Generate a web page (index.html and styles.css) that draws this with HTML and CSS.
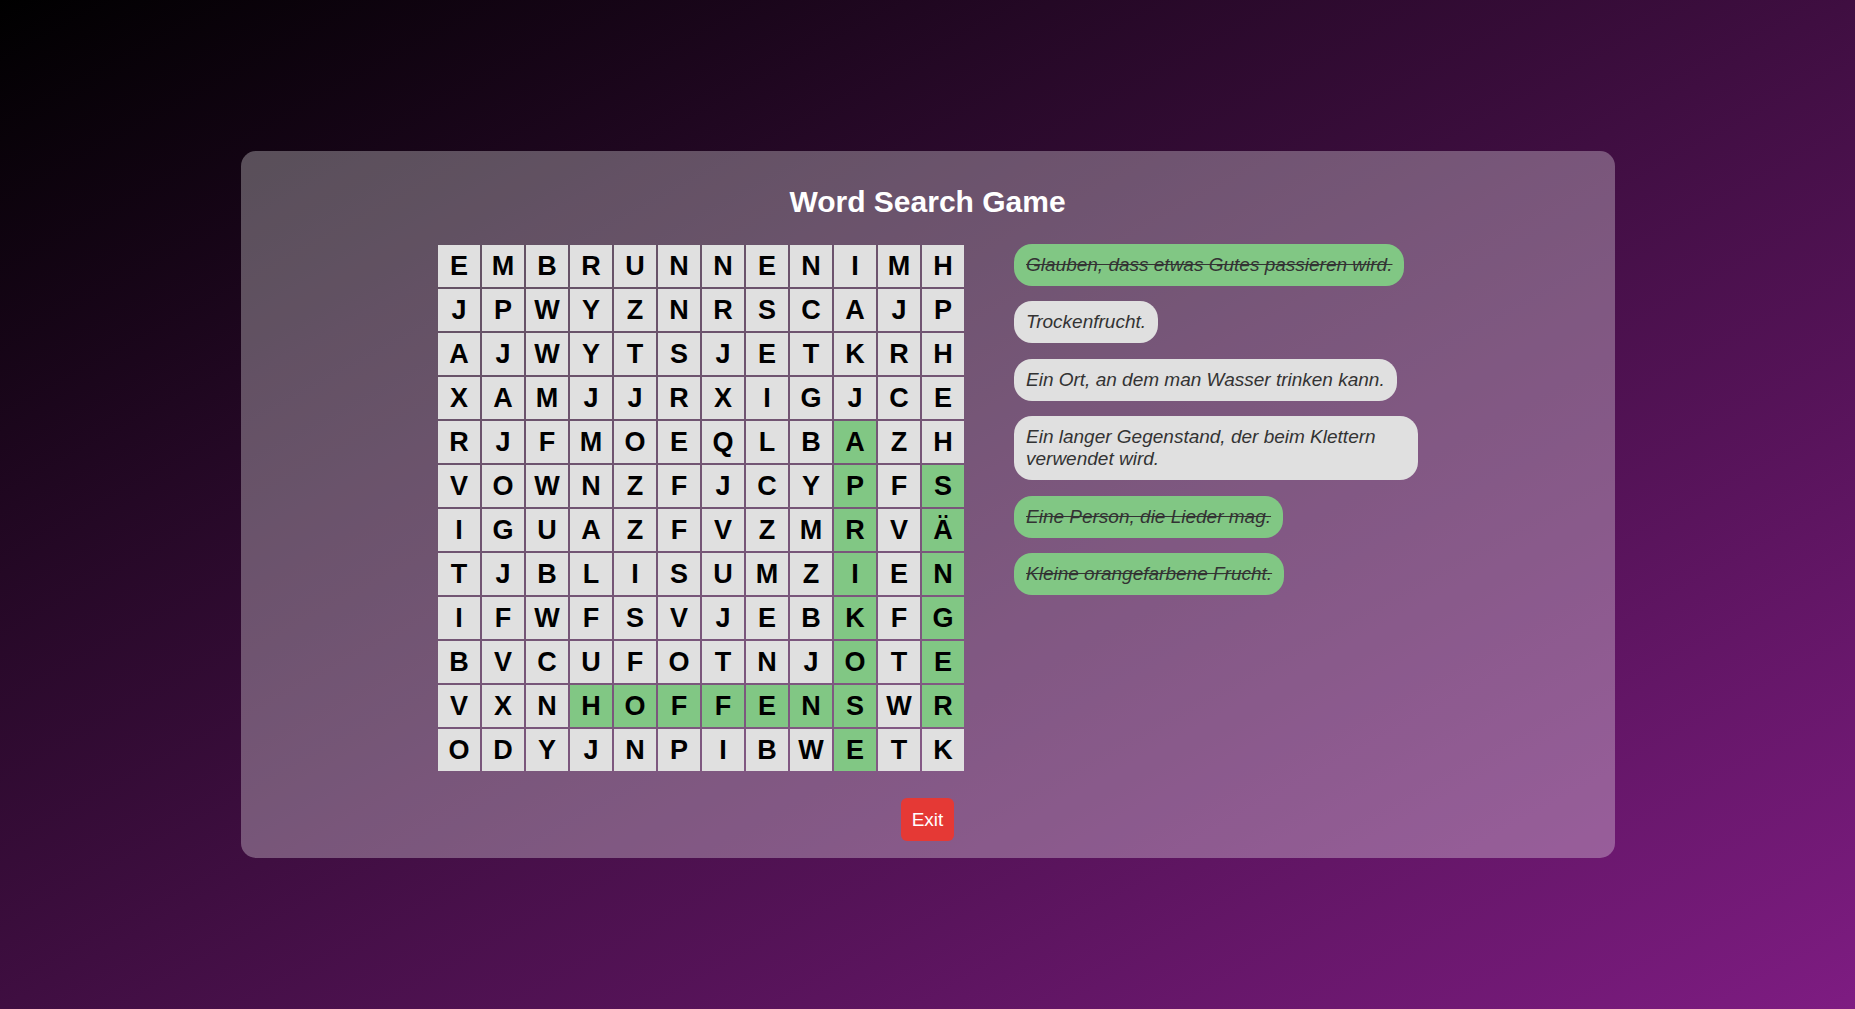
FILE: index.html
```html
<!DOCTYPE html>
<html lang="de">

<head>
    <meta charset="UTF-8">
    <meta name="viewport" content="width=device-width, initial-scale=1.0">
    <title>Word Search Game</title>
    <link rel="stylesheet" href="styles.css">
</head>

<body>
    <div class="game">
        <h1 class="title">Word Search Game</h1>

        <div class="board">
            <div class="grid">
                <div class="cell">E</div><div class="cell">M</div><div class="cell">B</div><div class="cell">R</div><div class="cell">U</div><div class="cell">N</div><div class="cell">N</div><div class="cell">E</div><div class="cell">N</div><div class="cell">I</div><div class="cell">M</div><div class="cell">H</div>
                <div class="cell">J</div><div class="cell">P</div><div class="cell">W</div><div class="cell">Y</div><div class="cell">Z</div><div class="cell">N</div><div class="cell">R</div><div class="cell">S</div><div class="cell">C</div><div class="cell">A</div><div class="cell">J</div><div class="cell">P</div>
                <div class="cell">A</div><div class="cell">J</div><div class="cell">W</div><div class="cell">Y</div><div class="cell">T</div><div class="cell">S</div><div class="cell">J</div><div class="cell">E</div><div class="cell">T</div><div class="cell">K</div><div class="cell">R</div><div class="cell">H</div>
                <div class="cell">X</div><div class="cell">A</div><div class="cell">M</div><div class="cell">J</div><div class="cell">J</div><div class="cell">R</div><div class="cell">X</div><div class="cell">I</div><div class="cell">G</div><div class="cell">J</div><div class="cell">C</div><div class="cell">E</div>
                <div class="cell">R</div><div class="cell">J</div><div class="cell">F</div><div class="cell">M</div><div class="cell">O</div><div class="cell">E</div><div class="cell">Q</div><div class="cell">L</div><div class="cell">B</div><div class="cell found">A</div><div class="cell">Z</div><div class="cell">H</div>
                <div class="cell">V</div><div class="cell">O</div><div class="cell">W</div><div class="cell">N</div><div class="cell">Z</div><div class="cell">F</div><div class="cell">J</div><div class="cell">C</div><div class="cell">Y</div><div class="cell found">P</div><div class="cell">F</div><div class="cell found">S</div>
                <div class="cell">I</div><div class="cell">G</div><div class="cell">U</div><div class="cell">A</div><div class="cell">Z</div><div class="cell">F</div><div class="cell">V</div><div class="cell">Z</div><div class="cell">M</div><div class="cell found">R</div><div class="cell">V</div><div class="cell found">Ä</div>
                <div class="cell">T</div><div class="cell">J</div><div class="cell">B</div><div class="cell">L</div><div class="cell">I</div><div class="cell">S</div><div class="cell">U</div><div class="cell">M</div><div class="cell">Z</div><div class="cell found">I</div><div class="cell">E</div><div class="cell found">N</div>
                <div class="cell">I</div><div class="cell">F</div><div class="cell">W</div><div class="cell">F</div><div class="cell">S</div><div class="cell">V</div><div class="cell">J</div><div class="cell">E</div><div class="cell">B</div><div class="cell found">K</div><div class="cell">F</div><div class="cell found">G</div>
                <div class="cell">B</div><div class="cell">V</div><div class="cell">C</div><div class="cell">U</div><div class="cell">F</div><div class="cell">O</div><div class="cell">T</div><div class="cell">N</div><div class="cell">J</div><div class="cell found">O</div><div class="cell">T</div><div class="cell found">E</div>
                <div class="cell">V</div><div class="cell">X</div><div class="cell">N</div><div class="cell found">H</div><div class="cell found">O</div><div class="cell found">F</div><div class="cell found">F</div><div class="cell found">E</div><div class="cell found">N</div><div class="cell found">S</div><div class="cell">W</div><div class="cell found">R</div>
                <div class="cell">O</div><div class="cell">D</div><div class="cell">Y</div><div class="cell">J</div><div class="cell">N</div><div class="cell">P</div><div class="cell">I</div><div class="cell">B</div><div class="cell">W</div><div class="cell found">E</div><div class="cell">T</div><div class="cell">K</div>
            </div>

            <ul class="clues">
                <li class="clue found">Glauben, dass etwas Gutes passieren wird.</li>
                <li class="clue">Trockenfrucht.</li>
                <li class="clue">Ein Ort, an dem man Wasser trinken kann.</li>
                <li class="clue">Ein langer Gegenstand, der beim Klettern verwendet wird.</li>
                <li class="clue found">Eine Person, die Lieder mag.</li>
                <li class="clue found">Kleine orangefarbene Frucht.</li>
            </ul>
        </div>

        <button class="btn-exit">Exit</button>
    </div>
</body>

</html>
```

FILE: styles.css
```css
* {
    margin: 0;
    padding: 0;
    box-sizing: border-box;
}

html,
body {
    height: 100%;
}

body {
    font-family: "Liberation Sans", Arial, sans-serif;
    background: linear-gradient(to bottom right, #000000, #7e1c82);
    display: flex;
    align-items: center;
    justify-content: center;
}

.game {
    width: 1374px;
    padding: 34px 24px 17px;
    background: rgba(255, 255, 255, 0.3);
    border-radius: 15px;
    display: flex;
    flex-direction: column;
    align-items: center;
}

.title {
    font-size: 30px;
    font-weight: 700;
    color: white;
    margin-bottom: 25px;
}

.board {
    display: flex;
    align-items: flex-start;
    gap: 49px;
}

.grid {
    display: grid;
    grid-template-columns: repeat(12, 42px);
    grid-auto-rows: 42px;
    gap: 2px;
    padding: 1px;
}

.cell {
    display: flex;
    align-items: center;
    justify-content: center;
    background: #e0e0e0;
    color: #000;
    font-size: 27px;
    font-weight: 700;
}

.cell.found {
    background: #81c784;
}

.clues {
    list-style: none;
    width: 404px;
    display: flex;
    flex-direction: column;
    align-items: flex-start;
    gap: 15.4px;
}

.clue {
    padding: 10px 12px;
    background: #e0e0e0;
    color: #333;
    border-radius: 18px;
    font-size: 19px;
    font-style: italic;
    line-height: 22px;
}

.clue.found {
    background: #81c784;
    text-decoration: line-through;
}

.btn-exit {
    margin-top: 26px;
    padding: 10px 11px;
    border: none;
    border-radius: 6px;
    background: #e53935;
    color: white;
    font-family: inherit;
    font-size: 19px;
    line-height: 23px;
    cursor: pointer;
}
```
